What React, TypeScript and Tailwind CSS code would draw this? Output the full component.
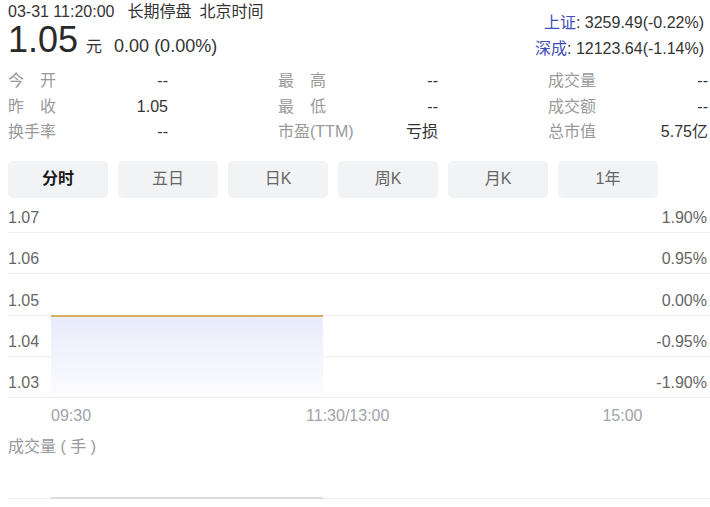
import React from "react";

const stats: [string, string][][] = [
  [["今　开", "--"], ["最　高", "--"], ["成交量", "--"]],
  [["昨　收", "1.05"], ["最　低", "--"], ["成交额", "--"]],
  [["换手率", "--"], ["市盈(TTM)", "亏损"], ["总市值", "5.75亿"]],
];

const tabs = ["分时", "五日", "日K", "周K", "月K", "1年"];

const rows = [
  { l: "1.07", r: "1.90%", h: "h-[35px]" },
  { l: "1.06", r: "0.95%", h: "h-[41px]" },
  { l: "1.05", r: "0.00%", h: "h-[42px]" },
  { l: "1.04", r: "-0.95%", h: "h-[41px]" },
  { l: "1.03", r: "-1.90%", h: "h-[41px]" },
];

export default function App() {
  return (
    <div
      className="w-[710px] h-[507px] bg-white overflow-hidden text-[#333]"
      style={{ fontFamily: '"Liberation Sans", Arial, "Noto Sans CJK SC", sans-serif' }}
    >
      {/* header */}
      <div className="flex justify-between items-start">
        <div className="pl-[8px] pt-[2px]">
          <div className="text-[16px] leading-[20px] text-[#333] whitespace-nowrap">
            03-31 11:20:00<span className="ml-[13px]">长期停盘</span>
            <span className="ml-[8px]">北京时间</span>
          </div>
          <div className="flex items-baseline h-[36px] leading-[36px] whitespace-nowrap">
            <span className="text-[36px] text-[#2a2a2a]">1.05</span>
            <span className="text-[16px] ml-[8px]">元</span>
            <span className="text-[18px] ml-[12px]">0.00 (0.00%)</span>
          </div>
        </div>
        <div className="pr-[6px] pt-[10px] text-right text-[16px] leading-[26px] whitespace-nowrap">
          <div>
            <span className="text-[#3f4db8]">上证</span>: 3259.49(-0.22%)
          </div>
          <div>
            <span className="text-[#3f4db8]">深成</span>: 12123.64(-1.14%)
          </div>
        </div>
      </div>

      {/* stats */}
      <div className="mt-[6px] pl-[8px] grid grid-cols-[160px_160px_160px] gap-x-[110px] text-[16px] leading-[25.5px]">
        {stats.flat().map(([k, v], i) => (
          <div key={i} className="flex justify-between whitespace-nowrap">
            <span className="text-[#999]">{k}</span>
            <span className="text-[#333]">{v}</span>
          </div>
        ))}
      </div>

      {/* tabs */}
      <div className="mt-[16px] pl-[8px] flex gap-[10px]">
        {tabs.map((t, i) => (
          <div
            key={t}
            className={
              i === 0
                ? "w-[100px] h-[37px] rounded-[5px] bg-[#f2f3f5] flex items-center justify-center text-[16px] font-bold text-[#1a1a1a]"
                : "w-[100px] h-[37px] rounded-[5px] bg-[#f2f3f5] flex items-center justify-center text-[16px] text-[#666]"
            }
          >
            {t}
          </div>
        ))}
      </div>

      {/* chart */}
      <div className="relative ml-[8px] w-[702px]">
        {rows.map((r) => (
          <div
            key={r.l}
            className={`${r.h} border-b border-[#eeeeee] flex items-end justify-between pb-[4px] pr-[3px] text-[16px] leading-[20px] text-[#666]`}
          >
            <span>{r.l}</span>
            <span>{r.r}</span>
          </div>
        ))}
        <div className="absolute left-[43px] top-[117px] w-[272px]">
          <div className="h-[2px] bg-[#d5ae5f]" />
          <div className="h-[77px] bg-linear-to-b from-[#e8ebfb] to-[#fcfcff]" />
        </div>
      </div>

      {/* time axis */}
      <div className="ml-[8px] mt-[8px] flex text-[16px] leading-[20px] text-[#a2a2aa] whitespace-nowrap">
        <span className="ml-[43px]">09:30</span>
        <span className="ml-[215px]">11:30/13:00</span>
        <span className="ml-[213px]">15:00</span>
      </div>

      {/* volume */}
      <div className="mt-[11px] pl-[8px] text-[16px] leading-[20px] text-[#999] whitespace-nowrap">
        成交量 ( 手 )
      </div>
      <div className="relative ml-[8px] h-[42px] border-b border-[#eeeeee]">
        <div className="absolute left-[43px] bottom-[-1px] w-[272px] h-[2px] bg-[#dcdce0]" />
      </div>
    </div>
  );
}
